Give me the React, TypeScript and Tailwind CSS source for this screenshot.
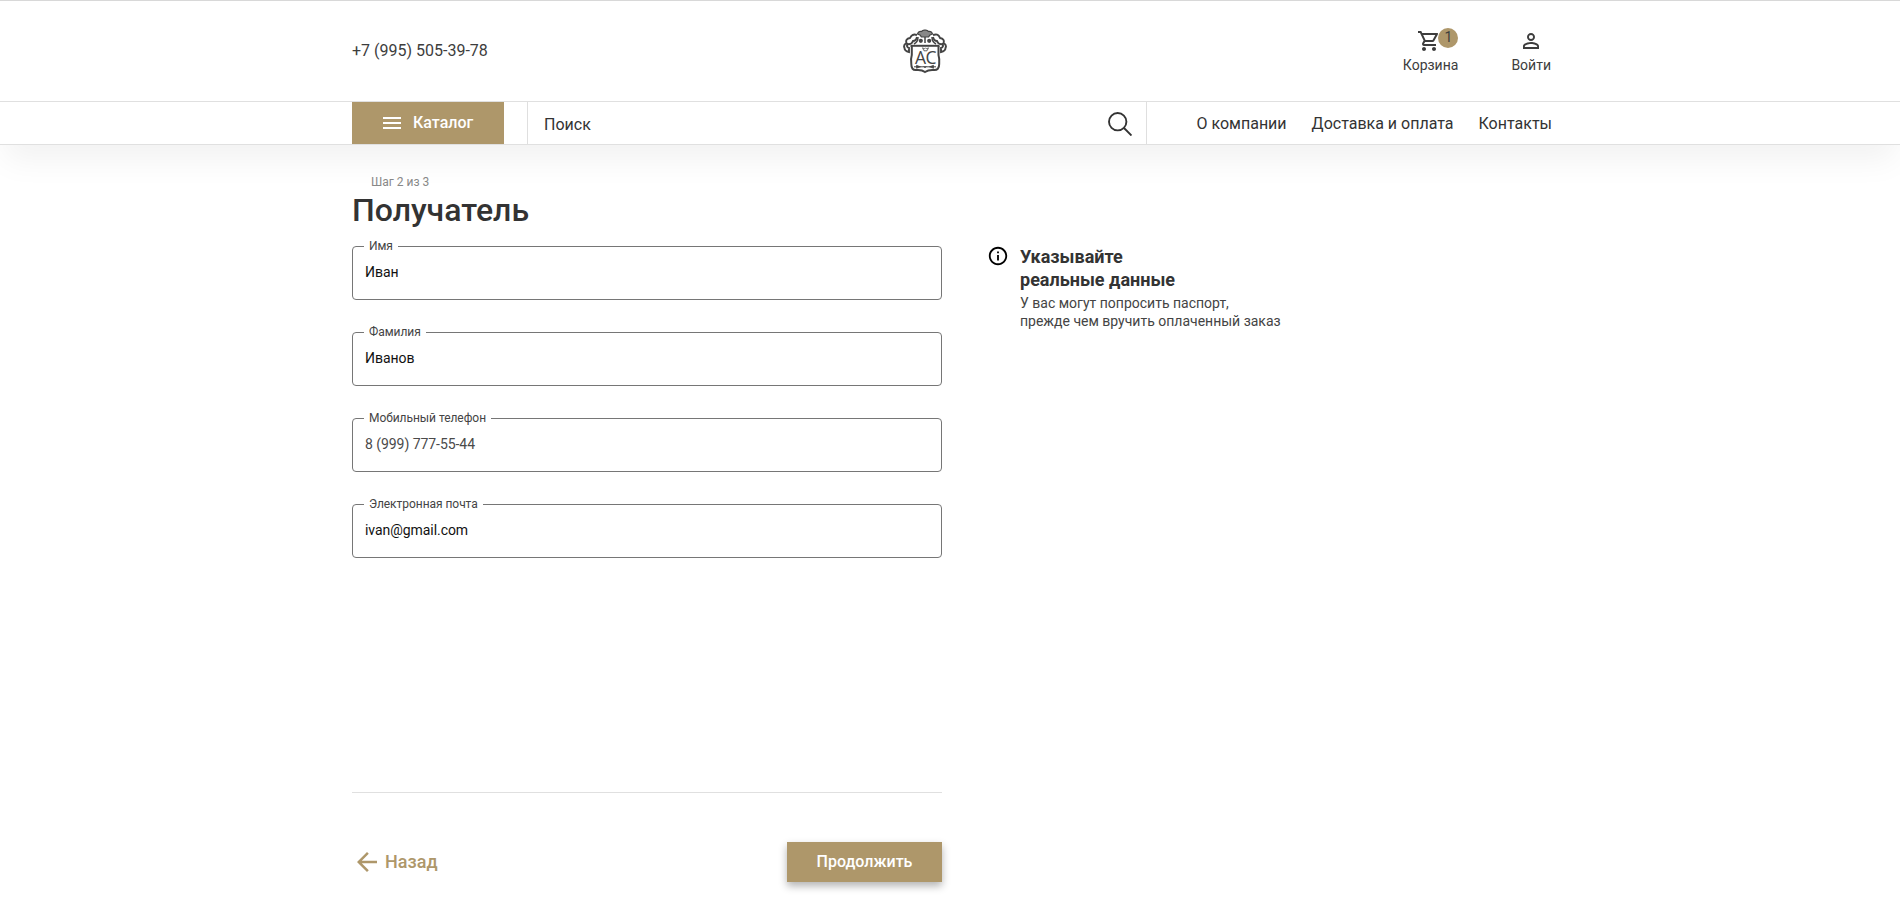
import { MdArrowBack, MdInfoOutline, MdMenu, MdOutlineShoppingCart, MdPersonOutline } from "react-icons/md";

function Logo() {
  return (
    <svg viewBox="0 0 46 48" className="h-12 w-[46px]" fill="none" stroke="#444" strokeWidth="1.6">
      <path d="M15.500 7q1-3 4-2.500q1.500-1.800 3.500-1.300q2-.5 3.500 1.300q3-.5 4 2.500q-3 .5-4 3h-7q-1-2.500-4-3z" fill="#888" strokeWidth="1.200" />
      <path d="M15 8q-5-2-7 3q-5 1-3.500 5q-3.500 2-2 5q0 3 4.500 4v-4q-3-1-1.500-4q4 1 5.500-3q3 0 4-4M31 8q5-2 7 3q5 1 3.500 5q3.500 2 2 5q0 3-4.500 4v-4q3-1 1.500-4q-4 1-5.500-3q-3 0-4-4" strokeWidth="1.900" />
      <path d="M12 17q4-2 4-7M34 17q-4-2-4-7M23 10v6" strokeWidth="1.500" />
      <circle cx="18.800" cy="13.800" r="2.100" fill="#444" stroke="none" />
      <circle cx="27.200" cy="13.800" r="2.100" fill="#444" stroke="none" />
      <path d="M8.500 18.800h29" strokeWidth="2" />
      <path d="M9.800 19v9q-1.300 4-.5 9q0 6.500 5 6q5.500-.5 8.700 2q3.700-2.500 8.700-2q5.500.5 5.500-6q.5-5-.7-9v-9" strokeWidth="2" />
      <path d="M12 39.800h22" strokeWidth="1" />
      <path d="M14.500 38.300l4 1.500l-4 1.500zM31.500 38.300l-4 1.500l4 1.500zM21.500 39.500l1.500 1.300l1.500-1.300" fill="#444" strokeWidth="0.700" />
      <path d="M20.500 20.800l1.500 3h3l1.500-3l-2 1l-1-1l-1 1z" strokeWidth="0.800" />
      <text x="23.500" y="37" textAnchor="middle" fontFamily="Open Sans, sans-serif" fontSize="17.500" fill="#444" stroke="none" letterSpacing="-0.500">АС</text>
    </svg>
  );
}

function Field({ label, value, light }: { label: string; value: string; light?: boolean }) {
  return (
    <fieldset className="h-[61px] w-full rounded border border-[#767676] pl-[11px]">
      <legend className="h-[14px] px-[5px] text-xs leading-[14px] tracking-[-0.004em] text-[#444]">{label}</legend>
      <div className={light ? "pt-[11px] pl-px text-sm leading-4 tracking-[-0.004em] text-[#4a4a4a]" : "pt-[11px] pl-px text-sm leading-4 tracking-[-0.004em] text-[#111]"}>{value}</div>
    </fieldset>
  );
}

const fields = [
  { label: "Имя", value: "Иван" },
  { label: "Фамилия", value: "Иванов" },
  { label: "Мобильный телефон", value: "8 (999) 777-55-44", light: true },
  { label: "Электронная почта", value: "ivan@gmail.com" },
];

export default function App() {
  return (
    <div className="h-[912px] w-[1900px] overflow-hidden bg-white font-['Roboto',sans-serif] text-[#333]">
      <header className="border-t border-[#d8d8d8] shadow-[0_20px_30px_-5px_rgba(0,0,0,0.055)]">
        <div className="ml-[352px] flex h-[100px] w-[1200px] items-center">
          <div className="w-[550px] text-base text-[#3d3d3d]">+7 (995) 505-39-78</div>
          <Logo />
          <div className="flex flex-1 justify-end gap-[53px] pr-px text-sm leading-4 text-[#3d3d3d]">
            <div className="relative flex flex-col items-center gap-1">
              <MdOutlineShoppingCart className="mr-1 size-6" />
              <span>Корзина</span>
              <span className="absolute -top-px right-0 flex size-5 items-center justify-center rounded-full bg-[#ae976a] pb-0.5">1</span>
            </div>
            <div className="flex flex-col items-center gap-1">
              <MdPersonOutline className="size-6" />
              <span>Войти</span>
            </div>
          </div>
        </div>
        <nav className="border-y border-[#e0e0e0]">
          <div className="ml-[352px] flex h-[42px] w-[1200px]">
            <button className="flex w-[152px] items-center gap-[9px] bg-[#ae976a] pl-7 font-medium text-white">
              <MdMenu className="size-6" />
              <span>Каталог</span>
            </button>
            <div className="ml-[23px] flex w-[620px] items-center justify-between border-x border-[#dfdfdf] pr-[14px] pl-4">
              <span className="pt-[3px]">Поиск</span>
              <svg viewBox="0 0 24 24" className="mt-px size-6" fill="none" stroke="#333" strokeWidth="1.900">
                <circle cx="9.700" cy="9.700" r="8.700" />
                <path d="M16 16l7.500 7.500" />
              </svg>
            </div>
            <div className="flex flex-1 items-center justify-end gap-[25px] pt-0.5">
              <span>О компании</span>
              <span>Доставка и оплата</span>
              <span>Контакты</span>
            </div>
          </div>
        </nav>
      </header>
      <main className="ml-[352px] flex w-[1200px] gap-[45px] pt-[30px]">
        <section className="w-[590px]">
          <div className="pl-[19px] text-xs leading-[14px] text-[#888]">Шаг 2 из 3</div>
          <h1 className="h-[50px] text-[32px] leading-[42px] font-medium">Получатель</h1>
          <div className="flex flex-col gap-[25px]">
            {fields.map((field) => <Field key={field.label} {...field} />)}
          </div>
          <div className="mt-[234px] flex items-center justify-between border-t border-[#e0e0e0] pt-[49px]">
            <div className="flex items-center gap-[3px] text-lg font-medium text-[#ae976a]">
              <MdArrowBack className="size-[30px]" />
              <span>Назад</span>
            </div>
            <button className="h-10 w-[155px] bg-[#ae976a] font-medium text-white shadow-[0_4px_8px_rgba(0,0,0,0.3)]">Продолжить</button>
          </div>
        </section>
        <aside className="flex items-start gap-[11px] pt-[70px]">
          <MdInfoOutline className="size-[22px] text-black" />
          <div>
            <h2 className="text-lg leading-[23px] font-bold">Указывайте<br />реальные данные</h2>
            <p className="pt-[3px] text-sm leading-[18px] text-[#444]">У вас могут попросить паспорт,<br />прежде чем вручить оплаченный заказ</p>
          </div>
        </aside>
      </main>
    </div>
  );
}
